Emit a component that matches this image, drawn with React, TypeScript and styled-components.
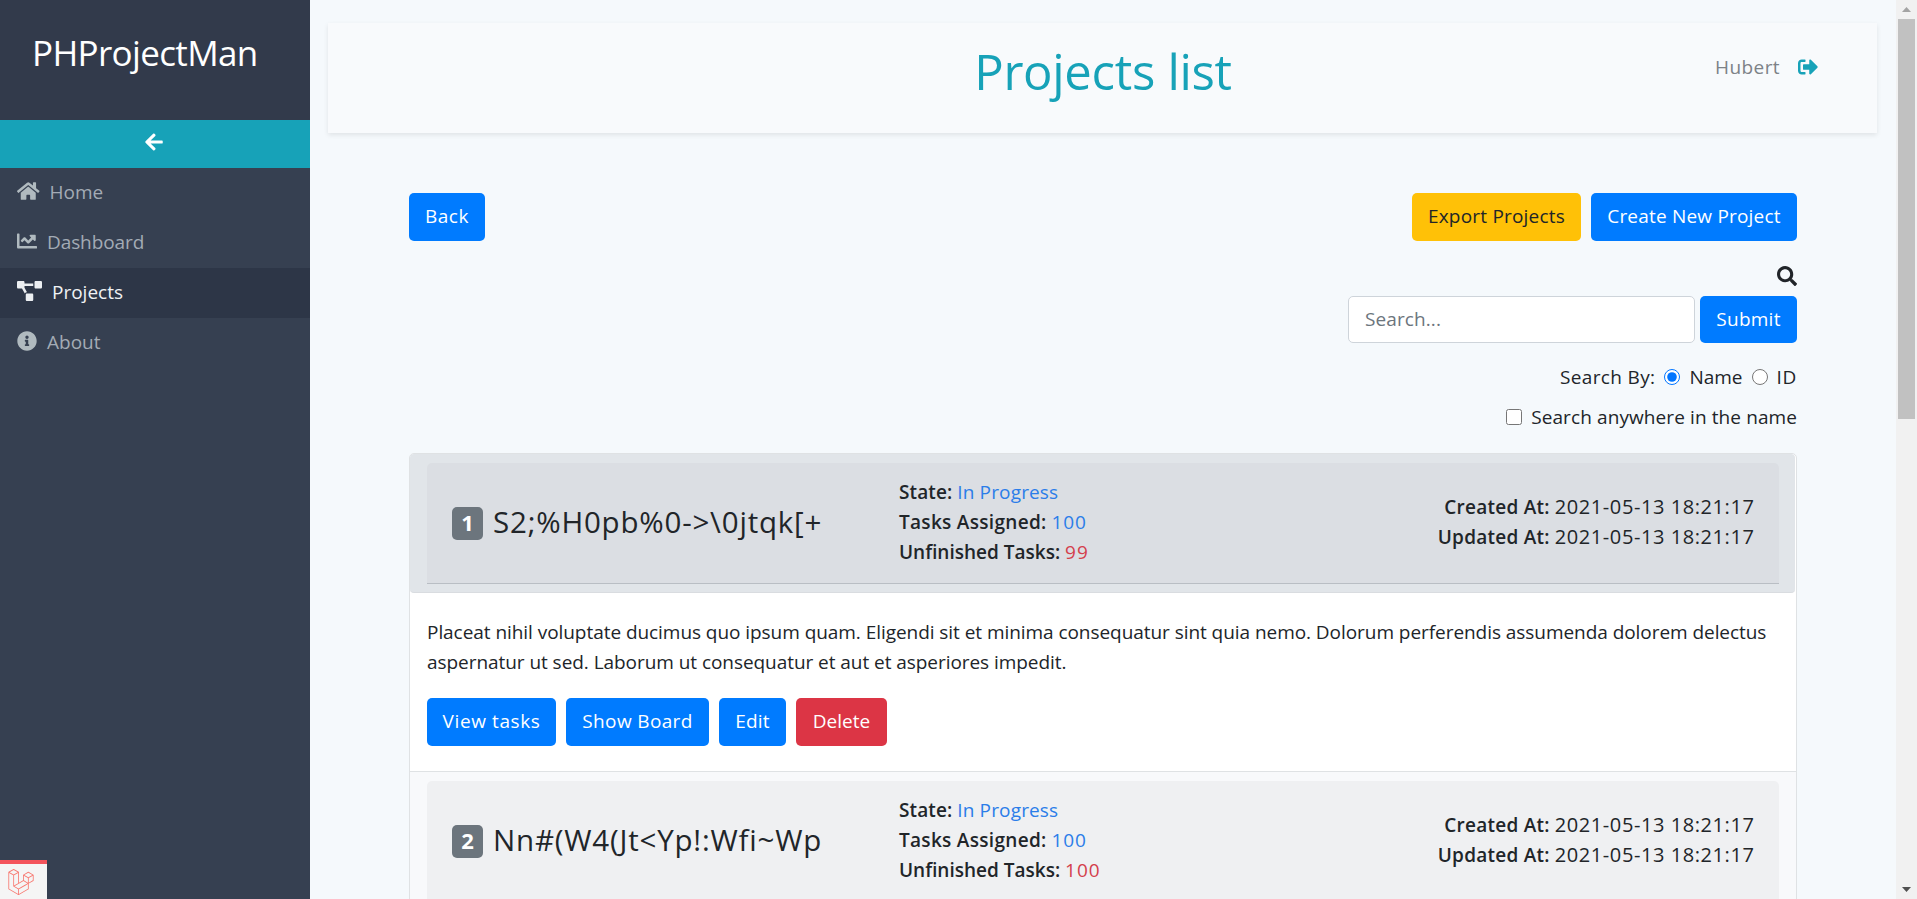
import React from "react";
import styled, { createGlobalStyle } from "styled-components";
import {
  FaArrowLeft,
  FaChartLine,
  FaHome,
  FaInfoCircle,
  FaProjectDiagram,
  FaSearch,
  FaSignOutAlt,
} from "react-icons/fa";
import { SiLaravel } from "react-icons/si";

const GlobalStyle = createGlobalStyle`
  *, *::before, *::after { box-sizing: border-box; }
  body {
    margin: 0;
    overflow: hidden;
    background: #f5f9fc;
    color: #212529;
    font: 400 19px/30px "Open Sans", "Noto Sans", sans-serif;
  }
  h1, h2, p { margin: 0; font-weight: 400; }
  svg { display: block; flex: none; }
`;

const Page = styled.div`
  display: flex;
  width: 100%;
  height: 899px;
  overflow: hidden;
`;

/* Spaced text; the amount differs between labels */
const Text = styled.span<{ $ls?: number }>`
  letter-spacing: ${(p) => p.$ls ?? 0}px;
  white-space: nowrap;
`;

/* ---------- Sidebar ---------- */

const Sidebar = styled.aside`
  position: relative;
  flex: none;
  width: 310px;
  background: #364051;
`;

const Brand = styled.div`
  height: 120px;
  padding: 26px 0 0 32px;
  background: #323a4b;
  color: #fff;
  font-size: 35px;
  line-height: 54px;
`;

const Collapse = styled.button`
  display: flex;
  justify-content: center;
  width: 100%;
  height: 48px;
  padding: 12px 3px 0 0;
  border: 0;
  background: #17a2b8;
  color: #fff;
  font-size: 20px;
`;

const NavItem = styled.a<{ $active?: boolean }>`
  display: flex;
  gap: 10px;
  height: 50px;
  padding: 9px 17px 0;
  background: ${(p) => (p.$active ? "#2d3647" : "transparent")};
  color: ${(p) => (p.$active ? "#f0f2f4" : "#a3abb5")};

  svg {
    height: 20px;
    margin-top: 4px;
    color: ${(p) => (p.$active ? "#eceff2" : "#b0babf")};
  }
`;

const DebugTab = styled.div`
  position: absolute;
  left: 0;
  bottom: 0;
  width: 47px;
  height: 39px;
  padding: 5px 0 0 8px;
  border-top: 4px solid #f4545c;
  background: #f5f5f5;
  color: #f8776f;
`;

/* ---------- Main column ---------- */

const Main = styled.main`
  flex: 1;
  min-width: 0;
  padding: 23px 19px 0 18px;
`;

const Header = styled.header`
  display: grid;
  grid-template-columns: 1fr auto 1fr;
  height: 110px;
  padding: 18px 59px 0;
  background: #f8fafc;
  box-shadow: 0 2px 5px rgba(0, 0, 0, 0.09);
`;

const Title = styled.h1`
  grid-column: 2;
  margin-left: 1px;
  color: #17a2b8;
  font-size: 49px;
  line-height: 60px;
`;

const User = styled.div`
  display: flex;
  justify-self: end;
  gap: 18px;
  padding-top: 11px;
  color: #7d8287;

  svg {
    margin-top: 5px;
    color: #17a2b8;
  }
`;

const Content = styled.section`
  width: 1388px;
  margin: 60px 0 0 81px;
`;

const Row = styled.div<{ $gap?: number }>`
  display: flex;
  gap: ${(p) => p.$gap ?? 10}px;
`;

const Toolbar = styled(Row)`
  justify-content: space-between;
`;

const tones = {
  primary: ["#007bff", "#fff"],
  warning: ["#ffc107", "#212529"],
  danger: ["#dc3545", "#fff"],
};

const Button = styled.button<{ $w: number; $h?: number; $tone?: keyof typeof tones }>`
  width: ${(p) => p.$w}px;
  height: ${(p) => p.$h ?? 48}px;
  padding: 0 0 2px;
  border: 0;
  border-radius: 5px;
  background: ${(p) => tones[p.$tone ?? "primary"][0]};
  color: ${(p) => tones[p.$tone ?? "primary"][1]};
  font: inherit;
`;

const SearchForm = styled.form`
  display: flex;
  flex-direction: column;
  align-items: flex-end;
  padding-top: 25px;
`;

const SearchRow = styled(Row)`
  margin-top: 10px;
`;

const SearchInput = styled.input`
  width: 347px;
  height: 47px;
  padding: 0 16px 1px;
  border: 1px solid #ced4da;
  border-radius: 5px;
  background: #fff;
  font: inherit;
  letter-spacing: 0.1px;

  &::placeholder {
    color: #6c757d;
  }
`;

const Options = styled.div<{ $top: number }>`
  display: flex;
  height: 30px;
  margin-top: ${(p) => p.$top}px;
`;

const Choice = styled.input<{ $ml?: number; $mr?: number }>`
  width: 16px;
  height: 16px;
  margin: 7px ${(p) => p.$mr ?? 9}px 0 ${(p) => p.$ml ?? 0}px;
  accent-color: #0075ff;
`;

/* ---------- Project cards ---------- */

const List = styled.div`
  margin-top: 21px;
  border: 1px solid #dfe2e4;
  border-radius: 5px;
  background: #fff;
`;

const CardHead = styled.div<{ $selected?: boolean }>`
  height: ${(p) => (p.$selected ? 139 : 140)}px;
  margin-right: ${(p) => (p.$selected ? 1 : 0)}px;
  padding: 9px ${(p) => (p.$selected ? 16 : 17)}px 0 17px;
  border-radius: ${(p) => (p.$selected ? "4px" : "0")};
  border-bottom: 1px solid ${(p) => (p.$selected ? "#d9dce0" : "#f8f9fb")};
  background: ${(p) => (p.$selected ? "#e1e5e9" : "#f8f9fb")};
`;

const Summary = styled.div<{ $selected?: boolean }>`
  display: flex;
  align-items: center;
  height: 121px;
  padding: 0 25px 2px;
  border-radius: 5px 5px 0 0;
  border-bottom: 1px solid ${(p) => (p.$selected ? "#b9bec4" : "#d0d3d6")};
  background: ${(p) => (p.$selected ? "#dbdee3" : "#eff0f2")};
`;

const Name = styled.h2`
  display: flex;
  align-items: center;
  gap: 10px;
  width: 447px;
  font-size: 29.5px;
  line-height: 36px;
`;

const Badge = styled.span`
  width: 31px;
  height: 33px;
  margin-top: 3px;
  border-radius: 5px;
  background: #6c757d;
  color: #fff;
  font-size: 22px;
  font-weight: 700;
  line-height: 30px;
  text-align: center;
`;

const Facts = styled.dl`
  flex: 1;
  margin: 0;
`;

const Dates = styled(Facts)`
  text-align: right;
`;

const Fact = styled.div`
  height: 30px;
  white-space: nowrap;
`;

const Label = styled.b<{ $ls?: number }>`
  margin-right: 5px;
  font-weight: 600;
  letter-spacing: ${(p) => p.$ls ?? 0}px;
`;

const Value = styled.span<{ $tone: string; $ls: number }>`
  color: ${(p) => p.$tone};
  letter-spacing: ${(p) => p.$ls}px;
`;

const DateText = styled.span`
  margin-right: -0.5px;
  font-size: 20px;
  letter-spacing: 0.58px;
`;

const CardBody = styled.div`
  height: 179px;
  padding: 24px 16px 0 17px;
  border-bottom: 1px solid #dfe2e4;
`;

const Description = styled.p`
  height: 60px;
  margin-bottom: 21px;
  letter-spacing: -0.053px;
`;

/* ---------- Scrollbar ---------- */

const Scrollbar = styled.div`
  display: flex;
  flex: none;
  flex-direction: column;
  align-items: center;
  width: 21px;
  height: 899px;
  background: #f1f1f1;
`;

const Thumb = styled.div`
  flex: none;
  width: 17px;
  height: 400px;
  margin-bottom: auto;
  background: #c1c1c1;
`;

const Arrow = styled.svg`
  width: 21px;
  height: 19px;
`;

type ProjectProps = {
  id: number;
  name: string;
  unfinished: number;
  selected?: boolean;
};

function ProjectHead({ id, name, unfinished, selected }: ProjectProps) {
  return (
    <CardHead $selected={selected}>
      <Summary $selected={selected}>
        <Name>
          <Badge>{id}</Badge>
          <Text $ls={0.8}>{name}</Text>
        </Name>
        <Facts>
          <Fact>
            <Label $ls={0.1}>State:</Label>
            <Value $tone="#2b7de9" $ls={0.15}>In Progress</Value>
          </Fact>
          <Fact>
            <Label $ls={0.3}>Tasks Assigned:</Label>
            <Value $tone="#2b7de9" $ls={0.9}>100</Value>
          </Fact>
          <Fact>
            <Label>Unfinished Tasks:</Label>
            <Value $tone="#d43f4c" $ls={1}>{unfinished}</Value>
          </Fact>
        </Facts>
        <Dates>
          <Fact>
            <Label $ls={0.25}>Created At:</Label>
            <DateText>2021-05-13 18:21:17</DateText>
          </Fact>
          <Fact>
            <Label $ls={0.25}>Updated At:</Label>
            <DateText>2021-05-13 18:21:17</DateText>
          </Fact>
        </Dates>
      </Summary>
    </CardHead>
  );
}

export default function App() {
  return (
    <Page>
      <GlobalStyle />
      <Sidebar>
        <Brand><Text $ls={-0.65}>PHProjectMan</Text></Brand>
        <Collapse aria-label="Collapse sidebar"><FaArrowLeft /></Collapse>
        <nav>
          <NavItem>
            <FaHome size={22.5} />
            <Text>Home</Text>
          </NavItem>
          <NavItem>
            <FaChartLine size={20} />
            <Text $ls={-0.1}>Dashboard</Text>
          </NavItem>
          <NavItem $active>
            <FaProjectDiagram size={25} />
            <Text>Projects</Text>
          </NavItem>
          <NavItem>
            <FaInfoCircle size={20} />
            <Text>About</Text>
          </NavItem>
        </nav>
        <DebugTab><SiLaravel size={26} /></DebugTab>
      </Sidebar>

      <Main>
        <Header>
          <Title><Text $ls={-0.3}>Projects list</Text></Title>
          <User>
            <Text $ls={0.4}>Hubert</Text>
            <FaSignOutAlt size={20} />
          </User>
        </Header>

        <Content>
          <Toolbar>
            <Button $w={76}><Text $ls={0.5}>Back</Text></Button>
            <Row>
              <Button $w={169} $tone="warning"><Text $ls={0.2}>Export Projects</Text></Button>
              <Button $w={206}><Text $ls={0.2}>Create New Project</Text></Button>
            </Row>
          </Toolbar>

          <SearchForm>
            <FaSearch size={20} />
            <SearchRow $gap={5}>
              <SearchInput placeholder="Search..." />
              <Button type="button" $w={97} $h={47}><Text $ls={0.25}>Submit</Text></Button>
            </SearchRow>
            <Options $top={19}>
              <Text $ls={0.35}>Search By:</Text>
              <Choice type="radio" name="by" defaultChecked $ml={9} />
              <Text>Name</Text>
              <Choice type="radio" name="by" $ml={9} />
              <Text $ls={0.7}>ID</Text>
            </Options>
            <Options $top={10}>
              <Choice type="checkbox" />
              <Text $ls={0.1}>Search anywhere in the name</Text>
            </Options>
          </SearchForm>

          <List>
            <ProjectHead id={1} name="S2;%H0pb%0->\0jtqk[+" unfinished={99} selected />
            <CardBody>
              <Description>
                Placeat nihil voluptate ducimus quo ipsum quam. Eligendi sit et minima consequatur sint
                quia nemo. Dolorum perferendis assumenda dolorem delectus aspernatur ut sed. Laborum ut
                consequatur et aut et asperiores impedit.
              </Description>
              <Row>
                <Button $w={129}><Text $ls={0.6}>View tasks</Text></Button>
                <Button $w={143}><Text $ls={0.35}>Show Board</Text></Button>
                <Button $w={67}><Text $ls={0.2}>Edit</Text></Button>
                <Button $w={91} $tone="danger"><Text>Delete</Text></Button>
              </Row>
            </CardBody>
            <ProjectHead id={2} name="Nn#(W4(Jt<Yp!:Wfi~Wp" unfinished={100} />
          </List>
        </Content>
      </Main>

      <Scrollbar>
        <Arrow viewBox="0 0 21 19"><path d="M6 12h9l-4.5-5z" fill="#a3a3a3" /></Arrow>
        <Thumb />
        <Arrow viewBox="0 0 21 19"><path d="M6 7h9l-4.5 5z" fill="#505050" /></Arrow>
      </Scrollbar>
    </Page>
  );
}
